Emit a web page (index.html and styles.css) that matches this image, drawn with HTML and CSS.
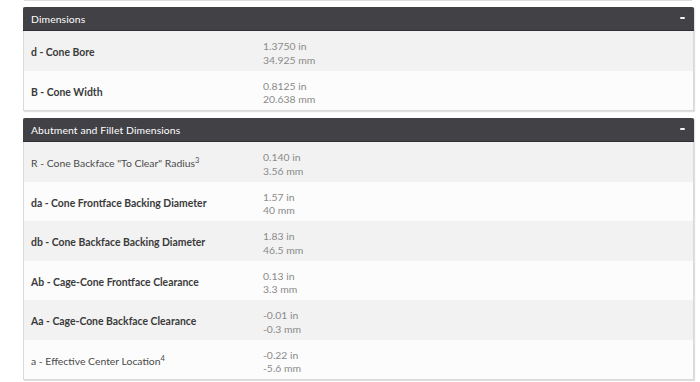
FILE: index.html
```html
<!DOCTYPE html>
<html>
<head>
<meta charset="utf-8">
<link rel="stylesheet" href="styles.css">
</head>
<body>
<div class="page">
  <div class="prev-edge"></div>

  <section class="panel">
    <header class="panel-head">
      <span class="panel-title">Dimensions</span>
      <span class="collapse" aria-label="collapse"></span>
    </header>
    <div class="row odd">
      <div class="label strong">d - Cone Bore</div>
      <div class="value">1.3750 in<br>34.925 mm</div>
    </div>
    <div class="row even">
      <div class="label strong">B - Cone Width</div>
      <div class="value">0.8125 in<br>20.638 mm</div>
    </div>
  </section>

  <section class="panel">
    <header class="panel-head">
      <span class="panel-title">Abutment and Fillet Dimensions</span>
      <span class="collapse" aria-label="collapse"></span>
    </header>
    <div class="row odd">
      <div class="label">R - Cone Backface "To Clear" Radius<sup>3</sup></div>
      <div class="value">0.140 in<br>3.56 mm</div>
    </div>
    <div class="row even">
      <div class="label strong">da - Cone Frontface Backing Diameter</div>
      <div class="value">1.57 in<br>40 mm</div>
    </div>
    <div class="row odd">
      <div class="label strong">db - Cone Backface Backing Diameter</div>
      <div class="value">1.83 in<br>46.5 mm</div>
    </div>
    <div class="row even">
      <div class="label strong">Ab - Cage-Cone Frontface Clearance</div>
      <div class="value">0.13 in<br>3.3 mm</div>
    </div>
    <div class="row odd">
      <div class="label strong">Aa - Cage-Cone Backface Clearance</div>
      <div class="value">-0.01 in<br>-0.3 mm</div>
    </div>
    <div class="row even">
      <div class="label">a - Effective Center Location<sup>4</sup></div>
      <div class="value">-0.22 in<br>-5.6 mm</div>
    </div>
  </section>
</div>
</body>
</html>
```

FILE: styles.css
```css
* { box-sizing: border-box; }

html, body {
  margin: 0;
  padding: 0;
  background: #ffffff;
}

body {
  font-family: Lato, "Open Sans", "Liberation Sans", sans-serif;
  color: #333;
}

.page {
  width: 700px;
  padding: 0 6px 0 23px;
  display: flex;
  flex-direction: column;
}

.prev-edge {
  height: 1px;
  margin: 0 2px 6px 1px;
  background: #dcdcdc;
}

.panel {
  display: flex;
  flex-direction: column;
  border: 1px solid #d9d9d9;
  border-top: none;
  box-shadow: 1px 1px 1px rgba(0, 0, 0, 0.12);
  margin-bottom: 7px;
  background: #fcfcfc;
}

.panel-head {
  height: 24px;
  margin: 0 -1px;
  background: #414146;
  color: #ffffff;
  display: flex;
  align-items: center;
  justify-content: space-between;
  padding: 0 9px 0 8px;
  border-radius: 2px 2px 0 0;
  border-bottom: 1px solid #2f2f33;
}

.panel-title {
  font-size: 10.4px;
  font-weight: 400;
  letter-spacing: 0.1px;
}

.collapse {
  width: 5px;
  height: 2px;
  background: #f2f2f2;
  border-radius: 1px;
  margin-top: -2px;
}

.row {
  display: grid;
  grid-template-columns: 232px 1fr;
  align-items: center;
  height: 39.5px;
  padding: 3px 7px 0;
}

.row.odd { background: #f2f2f2; }
.row.even { background: #fcfcfc; }

.label {
  font-size: 10.4px;
  color: #4a4a4a;
  line-height: 14px;
}

.label.strong {
  font-weight: 700;
  color: #3a3a3a;
}

.label sup {
  font-size: 7.5px;
  line-height: 0;
  vertical-align: 4px;
}

.value {
  font-size: 10.4px;
  font-weight: 400;
  color: #8a8a8a;
  line-height: 13.3px;
  margin-top: 3px;
}
```
